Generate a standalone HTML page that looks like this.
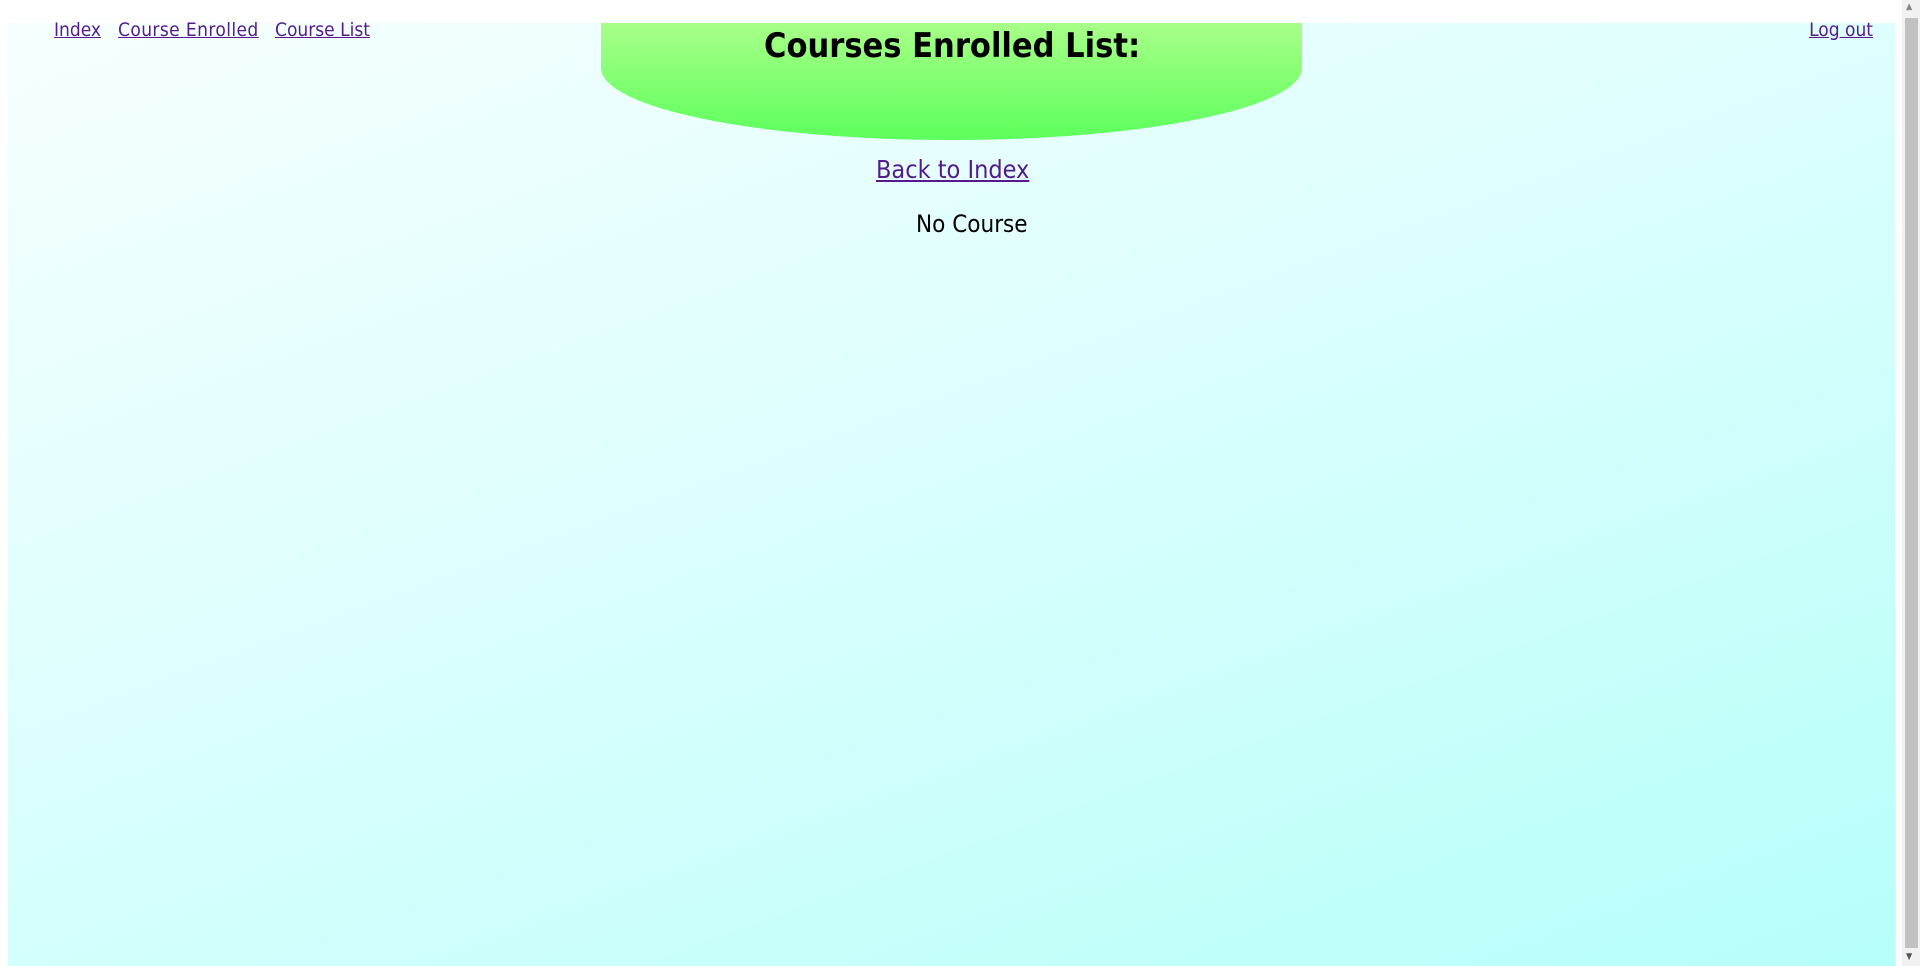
<!DOCTYPE html>
<html><head><meta charset="utf-8"><style>
html,body{margin:0;padding:0;width:1920px;height:966px;overflow:hidden;background:#fff;font-family:"DejaVu Sans Condensed","Liberation Sans",sans-serif;}
#pg{position:absolute;left:8px;top:23px;width:1887px;height:943px;background:linear-gradient(160deg,#f6fffe 0%,#dcfffd 45%,#b6fff9 100%);}
a{color:#551a8b;text-decoration:underline;}
.t{position:absolute;white-space:nowrap;}
#green{position:absolute;left:601px;top:23px;width:701px;height:117px;background:linear-gradient(#a8ff88,#5cff5c);border-radius:0 0 350px 350px / 0 0 72px 72px;}
#sb{position:absolute;left:1902px;top:0;width:18px;height:966px;background:#f1f1f1;}
#th{position:absolute;left:1905px;top:18px;width:13px;height:930px;background:#c1c1c1;}
</style></head><body>
<div id="pg"></div>
<div id="green"></div>
<div class="t" style="left:764px;top:26px;font-size:34px;font-weight:bold;">Courses Enrolled List:</div>
<a class="t" href="#" style="left:54px;top:19px;font-size:19px;">Index</a>
<a class="t" href="#" style="left:118px;top:19px;font-size:19px;letter-spacing:0.4px;">Course Enrolled</a>
<a class="t" href="#" style="left:275px;top:19px;font-size:19px;">Course List</a>
<a class="t" href="#" style="right:47px;top:19px;font-size:19px;">Log out</a>
<a class="t" href="#" style="left:876px;top:155px;font-size:25px;">Back to Index</a>
<div class="t" style="left:916px;top:210px;font-size:24px;">No Course</div>
<div id="sb"></div><div id="th"></div>
<div class="t" style="left:1906px;top:2px;font-size:9px;color:#888;">▲</div>
<div class="t" style="left:1906px;top:952px;font-size:9px;color:#555;">▼</div>
</body></html>
